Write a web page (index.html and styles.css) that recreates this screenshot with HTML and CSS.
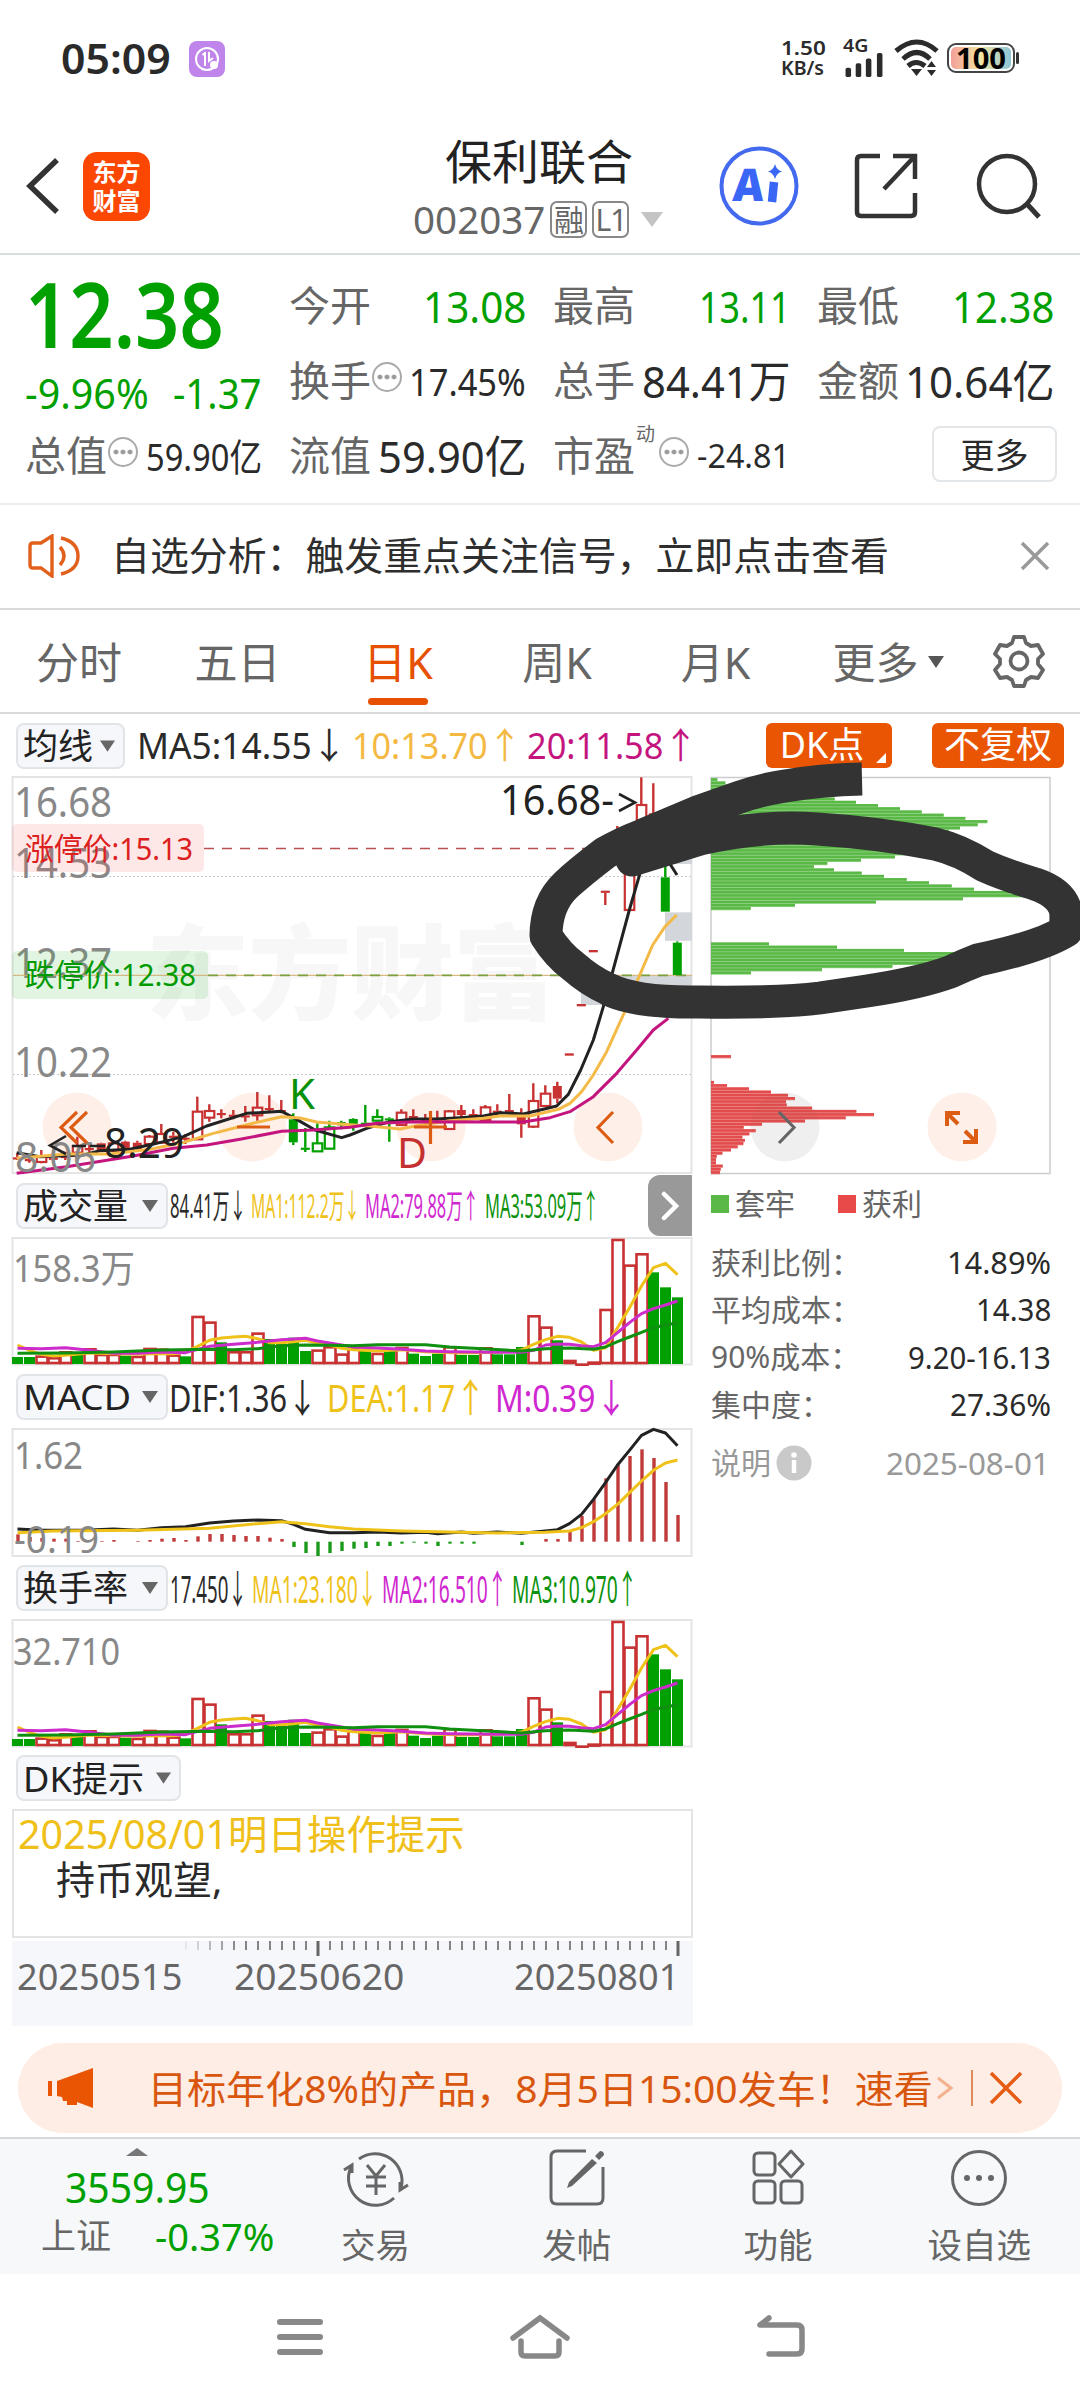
FILE: index.html
```html
<!DOCTYPE html>
<html lang="zh-CN">
<head>
<meta charset="utf-8">
<title>保利联合 002037</title>
<link rel="stylesheet" href="styles.css">
</head>
<body>
<header class="status">
  <span class="clock fit" data-w="110">05:09</span>
  <svg class="app-dot" width="36" height="36" viewBox="0 0 36 36"><rect width="36" height="36" rx="8" fill="#bf85ea"/><circle cx="18" cy="18" r="11" fill="none" stroke="#fff" stroke-width="2"/><path d="M16 11v14M13.500 14l2.500-2M20 11v9l4-3" fill="none" stroke="#fff" stroke-width="2"/><circle cx="25" cy="24" r="4" fill="#fff"/></svg>
  <div class="rate"><span class="fit" data-w="45">1.50</span><span class="fit" data-w="43">KB/s</span></div>
  <div class="signal"><span class="fit" data-w="25">4G</span>
    <svg width="42" height="24" viewBox="0 0 42 26" fill="#2b2b2b"><rect x="1" y="16" width="6" height="10" rx="2"/><rect x="12" y="11" width="6" height="15" rx="2"/><rect x="23" y="6" width="6" height="20" rx="2"/><rect x="35" y="0" width="6" height="26" rx="2"/></svg></div>
  <svg class="wifi" width="46" height="38" viewBox="0 0 46 38"><g fill="none" stroke="#2b2b2b" stroke-width="5"><path d="M2 12Q23-6 43 12M9 20Q23 7 36 20M14 27Q22 20 31 27"/></g><path d="M17 30h11l-5.500 7zM33 28h9l-4.500-6zM33 31h9l-4.500 6z" fill="#2b2b2b"/></svg>
  <div class="battery"><span class="fit" data-w="50">100</span></div>
</header>

<div class="titlebar">
  <svg class="back" width="34" height="56" viewBox="0 0 34 56"><path d="M31 2L4 28l27 26" fill="none" stroke="#333" stroke-width="5.500"/></svg>
  <div class="brand"><span>东方</span><span>财富</span></div>
  <div class="name">
    <h1>保利联合</h1>
    <div class="code"><span class="fit" data-w="132">002037</span><i>融</i><i>L1</i><svg width="22" height="15" viewBox="0 0 22 15"><path d="M0 0h22L11 15z" fill="#c4c4c4"/></svg></div>
  </div>
  <svg class="ai" width="80" height="82" viewBox="0 0 80 82"><circle cx="40" cy="41" r="37.500" fill="#fff" stroke="#4269ee" stroke-width="4"/><text x="14" y="56" textLength="31" lengthAdjust="spacingAndGlyphs" transform="skewX(-4) translate(3 0)">A</text><path d="M55 37l-2 20" stroke="#3a66f5" stroke-width="8.500"/><path d="M56 19q1.500 6 7 7.500q-5.500 1.500-7 7.500q-1.500-6-7-7.500q5.500-1.500 7-7.500z" fill="#3a66f5"/></svg>
  <svg class="share" width="64" height="66" viewBox="0 0 64 66"><path d="M26 3H7q-4 0-4 4v52q0 4 4 4h50q4 0 4-4V40M39 3h22v23M61 3L30 36" fill="none" stroke="#333" stroke-width="4.500"/></svg>
  <svg class="search" width="66" height="68" viewBox="0 0 66 68"><circle cx="31" cy="32" r="28" fill="none" stroke="#333" stroke-width="4.500"/><path d="M51 52l12 13" stroke="#333" stroke-width="5"/></svg>
</div>

<section class="quote">
  <div class="last">
    <strong class="fit" data-w="199">12.38</strong>
    <div><span class="fit" data-w="124">-9.96%</span><span class="fit" data-w="89">-1.37</span></div>
  </div>
  <div class="cell"><label>今开</label><b class="fit down" data-w="103">13.08</b></div>
  <div class="cell"><label>最高</label><b class="fit down" data-w="91">13.11</b></div>
  <div class="cell"><label>最低</label><b class="fit down" data-w="102">12.38</b></div>
  <div class="cell"><label>换手</label><u></u><b class="fit mid" data-w="117">17.45%</b></div>
  <div class="cell"><label>总手</label><b class="fit" data-w="148">84.41万</b></div>
  <div class="cell"><label>金额</label><b class="fit" data-w="149">10.64亿</b></div>
  <div class="cell"><label>总值</label><u></u><b class="fit mid" data-w="116">59.90亿</b></div>
  <div class="cell"><label>流值</label><b class="fit" data-w="148">59.90亿</b></div>
  <div class="cell"><label>市盈</label><sup>动</sup><u></u><b class="fit small" data-w="93">-24.81</b></div>
  <div class="cell end"><button class="more">更多</button></div>
</section>

<section class="notice">
  <svg width="52" height="44" viewBox="0 0 52 44"><g fill="none" stroke="#e0601c" stroke-width="3.400"><path d="M2 12q0-3 3-3h8L24 2v40L13 34H5q-3 0-3-3z"/><path d="M32 13q8 9 0 18M33 4q17 4 17 18T33 40"/></g></svg>
  <p>自选分析：触发重点关注信号，立即点击查看</p>
  <svg width="30" height="30" viewBox="0 0 30 30"><path d="M2 2l26 26M28 2L2 28" stroke="#999" stroke-width="3.500"/></svg>
</section>

<nav class="tabs">
  <a style="width:158px">分时</a><a style="width:159px">五日</a><a class="on" style="width:162px">日K</a><a style="width:156px">周K</a><a style="width:161px">月K</a>
  <a class="drop">更多<svg width="16" height="12" viewBox="0 0 16 12"><path d="M0 0h16L8 12z" fill="#555"/></svg></a>
  <svg class="gear" width="54" height="54" viewBox="0 0 54 54"><g fill="none" stroke="#666" stroke-width="3.800" stroke-linejoin="round"><path d="M22 3h10l2 6 5 3 7-1 5 9-5 5v5l5 6-5 8-7-1-5 3-2 6H22l-2-6-5-3-7 1-5-8 5-6v-5l-5-5 5-9 7 1 5-3z"/><circle cx="27" cy="27" r="8.500"/></g></svg>
</nav>

<div class="legend top">
  <span class="pill ma">均线<svg width="15" height="12" viewBox="0 0 16 12"><path d="M0 0h16L8 12z"/></svg></span>
  <span class="fit black" data-w="210">MA5:14.55↓</span><span class="fit gold" data-w="170">10:13.70↑</span><span class="fit pink" data-w="171">20:11.58↑</span>
  <span class="tag dk">DK点</span><span class="tag">不复权</span>
</div>

<main class="body">
  <div class="charts">
    <svg id="kline" width="700" height="400" viewBox="0 775 700 400"></svg>
    <div class="legend vol">
      <span class="pill">成交量<svg width="16" height="12" viewBox="0 0 16 12"><path d="M0 0h16L8 12z"/></svg></span>
      <span class="fit black" data-w="76">84.41万↓</span><span class="fit yellow" data-w="109">MA1:112.2万↓</span><span class="fit violet" data-w="114">MA2:79.88万↑</span><span class="fit green" data-w="114">MA3:53.09万↑</span>
      <span class="expand"><svg width="18" height="30" viewBox="0 0 18 30"><path d="M3 3l12 12L3 27" fill="none" stroke="#fff" stroke-width="4.500" stroke-linecap="round"/></svg></span>
    </div>
    <svg id="volume" width="700" height="130" viewBox="0 1235 700 130"></svg>
    <div class="legend macd">
      <span class="pill"><em class="fit" data-w="108">MACD</em><svg width="16" height="12" viewBox="0 0 16 12"><path d="M0 0h16L8 12z"/></svg></span>
      <span class="fit black" data-w="149">DIF:1.36↓</span><span class="fit yellow" data-w="159">DEA:1.17↑</span><span class="fit violet" data-w="132">M:0.39↓</span>
    </div>
    <svg id="macd" width="700" height="130" viewBox="0 1426 700 130"></svg>
    <div class="legend turn">
      <span class="pill">换手率<svg width="16" height="12" viewBox="0 0 16 12"><path d="M0 0h16L8 12z"/></svg></span>
      <span class="fit black" data-w="77">17.450↓</span><span class="fit yellow" data-w="125">MA1:23.180↓</span><span class="fit violet" data-w="125">MA2:16.510↑</span><span class="fit green" data-w="125">MA3:10.970↑</span>
    </div>
    <svg id="turnover" width="700" height="130" viewBox="0 1617 700 130"></svg>
    <div class="legend hints"><span class="pill hint"><em class="fit" data-w="121">DK提示</em><svg width="15" height="12" viewBox="0 0 16 12"><path d="M0 0h16L8 12z"/></svg></span></div>
    <div class="tip"><p class="fit" data-w="447">2025/08/01明日操作提示</p><p>持币观望,</p></div>
    <div class="axis"><svg id="ticks" width="680" height="17" viewBox="12 1941 680 17"></svg>
      <div><span class="fit" data-w="165">20250515</span><span class="fit" data-w="170">20250620</span><span class="fit" data-w="165">20250801</span></div></div>
  </div>
  <aside class="chips">
    <svg id="dist" width="380" height="400" viewBox="700 775 380 400"></svg>
    <div class="keys"><i class="g"></i>套牢<i class="r"></i>获利</div>
    <dl>
      <div><dt>获利比例：</dt><dd class="fit" data-w="104">14.89%</dd></div>
      <div><dt>平均成本：</dt><dd class="fit" data-w="75">14.38</dd></div>
      <div><dt>90%成本：</dt><dd class="fit" data-w="143">9.20-16.13</dd></div>
      <div><dt>集中度：</dt><dd class="fit" data-w="101">27.36%</dd></div>
    </dl>
    <div class="explain">说明<svg width="36" height="36" viewBox="0 0 36 36"><circle cx="18" cy="18" r="17.500" fill="#c9c9c9"/><path d="M18 15v13" stroke="#fff" stroke-width="4.500"/><circle cx="18" cy="10" r="2.800" fill="#fff"/></svg><span class="fit" data-w="164">2025-08-01</span></div>
  </aside>
  <svg class="scribble" width="560" height="270" viewBox="520 755 560 270"><path d="M862 779Q820 780 785 786Q760 790 740 797L700 811L643 835Q620 844 605 853Q580 872 566 885Q546 904 546 936Q558 955 573 966Q590 981 608 989Q635 1003 700 1002Q780 1003 820 998L867 991Q920 983 950 972Q965 965 978 960Q1040 947 1066 931L1066 912Q1062 893 1035 884Q1005 875 985 866Q960 850 935 844Q880 833 817 829Q760 825 700 839L632 860"/><circle cx="632" cy="860" r="16.500"/></svg>
</main>

<div class="banner">
  <svg width="46" height="40" viewBox="0 0 46 40" fill="#ea5504"><path d="M9 13L45 0v40L29 34v3H19v-4h-4l-1-4-5-1zM0 13h4v15H0z"/></svg>
  <p class="fit" data-w="785">目标年化8%的产品，8月5日15:00发车！速看</p>
  <svg width="18" height="24" viewBox="0 0 18 24"><path d="M2 2l13 10L2 22" fill="none" stroke="#f3b28d" stroke-width="3"/></svg>
  <hr>
  <svg width="34" height="34" viewBox="0 0 34 34"><path d="M2 2l30 30M32 2L2 32" stroke="#e65c14" stroke-width="3.500"/></svg>
</div>

<footer class="bottom">
  <div class="index"><svg width="22" height="8" viewBox="0 0 22 8"><path d="M0 8h22L11 0z" fill="#777"/></svg><b class="fit" data-w="145">3559.95</b><div><span>上证</span><b class="fit" data-w="119">-0.37%</b></div></div>
  <a><svg width="66" height="60" viewBox="0 0 66 60"><g fill="none" stroke="#666" stroke-width="3"><path d="M16 11A27 27 0 0 1 58 40M51 50A27 27 0 0 1 8 19M1 22l8-5v8M65 37l-8 5v-8"/><path d="M24 17l9 11 9-11M23 29h20M23 38h20M33 28v19"/></g></svg>交易</a>
  <a><svg width="58" height="60" viewBox="0 0 58 60"><path d="M38 3H9q-6 0-6 6v41q0 6 6 6h40q6 0 6-6V19" fill="none" stroke="#666" stroke-width="3"/><path d="M44 11l5 4-25 23-5 2 2-6zM47 8l5-5q4 0 4 4l-5 5z" fill="#666"/></svg>发帖</a>
  <a><svg width="54" height="60" viewBox="0 0 54 60"><g fill="none" stroke="#666" stroke-width="3"><rect x="3" y="5" width="21" height="22" rx="4"/><rect x="3" y="33" width="21" height="22" rx="4"/><rect x="30" y="33" width="21" height="22" rx="4"/><path d="M40 3l12 13-12 13-12-13z" stroke-linejoin="round"/></g></svg>功能</a>
  <a><svg width="58" height="60" viewBox="0 0 58 60"><circle cx="29" cy="30" r="26.500" fill="none" stroke="#666" stroke-width="3"/><g fill="#666"><circle cx="17" cy="30" r="3"/><circle cx="29" cy="30" r="3"/><circle cx="41" cy="30" r="3"/></g></svg>设自选</a>
</footer>

<nav class="system">
  <svg width="46" height="38" viewBox="0 0 46 38"><path d="M3 4h40M3 19h40M3 34h40" stroke="#888" stroke-width="6" stroke-linecap="round"/></svg>
  <svg width="60" height="46" viewBox="0 0 60 46"><path d="M3 24L30 4l27 20M11 27v11q0 4 4 4h30q4 0 4-4V27" fill="none" stroke="#888" stroke-width="5.500" stroke-linecap="round"/></svg>
  <svg width="50" height="44" viewBox="0 0 50 44"><path d="M13 3L4 10h37q5 0 5 5v19q0 5-5 5H13" fill="none" stroke="#888" stroke-width="5.500" stroke-linecap="round" stroke-linejoin="round"/></svg>
</nav>
<script src="script.js"></script>
</body>
</html>
```
FILE: styles.css
```css
* { box-sizing: border-box; margin: 0; padding: 0; }
body { width: 1080px; height: 2400px; overflow: hidden; background: #fff; color: #2a2a2a; font: 400 38px/1 "Noto Sans", "Noto Sans CJK SC", sans-serif; }
svg { display: block; flex: none; }
svg text { font-family: "Noto Sans", "Noto Sans CJK SC", sans-serif; }
b, i, em, u { font-weight: 400; font-style: normal; text-decoration: none; }
.fit { display: inline-block; flex: none; white-space: nowrap; transform-origin: 0 50%; }

.status { display: flex; align-items: center; height: 116px; padding-left: 61px; }
.clock { font-size: 42px; font-weight: 600; }
.app-dot { margin: 2px 556px 0 18px; }
.rate, .signal { display: flex; flex-direction: column; font-weight: 600; color: #2b2b2b; }
.rate { width: 44px; margin-right: 18px; font-size: 20px; align-items: flex-start; }
.signal { width: 42px; margin-right: 9px; font-size: 18px; height: 38px; justify-content: space-between; align-items: flex-start; }
.signal .fit { line-height: 12px; }
.wifi { margin-right: 7px; }
.battery { position: relative; display: flex; justify-content: center; align-items: center; width: 68px; height: 30px; border: 2px solid #444; border-radius: 9px; background: linear-gradient(90deg, #f4a09a, #f5e6a0 50%, #8cc5d8) content-box; padding: 2px; font-size: 28px; font-weight: 700; color: #000; }
.battery::after { content: ""; position: absolute; right: -6px; top: 7px; width: 3px; height: 12px; background: #333; border-radius: 2px; }

.titlebar { display: flex; align-items: center; height: 139px; padding: 6px 0 3px 26px; border-bottom: 2px solid #d8dddf; }
.brand { display: flex; flex-direction: column; align-items: center; justify-content: center; width: 67px; height: 69px; margin-left: 23px; border-radius: 14px; background: #fc4703; color: #fff; font-size: 24px; font-weight: 700; gap: 5px; }
.name { width: 260px; margin-left: 259px; text-align: center; padding-top: 2px; }
.name h1 { font-size: 47px; font-weight: 400; line-height: 56px; color: #222; }
.code { display: flex; align-items: center; height: 44px; margin: 8px 0 0 4px; color: #666; font-size: 38px; }
.code i { width: 37px; height: 37px; margin-left: 5px; border: 2px solid #888; border-radius: 7px; font-size: 30px; line-height: 33px; text-align: center; }
.code i + i { letter-spacing: -1px; }
.code svg { margin-left: 12px; }
.ai { margin-left: 50px; }
.ai text { font-size: 45px; font-weight: 900; fill: #3a66f5; }
.share { margin-left: 55px; }
.search { margin-left: 58px; }

.quote { display: grid; grid-template-columns: repeat(4, 237px); grid-template-rows: 75px 75px 75px; column-gap: 27px; height: 250px; padding: 13px 0 0 25px; border-bottom: 2px solid #e9edef; }
.last { grid-row: 1 / 3; color: #00a000; }
.last strong { font-size: 90px; font-weight: 600; line-height: 100px; margin-top: -5px; }
.last div { display: flex; justify-content: space-between; font-size: 41px; line-height: 48px; margin-top: 6px; }
.cell { display: flex; align-items: center; }
.cell label { font-size: 41px; color: #666; }
.cell b { margin-left: auto; font-size: 44px; }
.cell b.fit { transform-origin: 100% 50%; }
.cell b.down { color: #00a000; }
.cell b.mid { font-size: 38px; }
.cell b.small { font-size: 33px; }
.cell u { width: 30px; height: 30px; margin: -8px 0 0 1px; border: 2.500px solid #aaa; border-radius: 50%; background: radial-gradient(circle, #999 2px, transparent 2.800px) 50% 50% / 7px 30px; background-clip: content-box; padding: 2px; }
.cell sup { font-size: 19px; color: #666; margin: -42px 3px 0 1px; }
.cell.end { justify-content: flex-end; }
.more { width: 125px; height: 56px; border: 2px solid #e3e7e9; border-radius: 8px; background: #fff; color: #2a2a2a; font: 400 34px/1 "Noto Sans CJK SC", sans-serif; margin-right: -3px; margin-bottom: 3px; }

.notice { display: flex; align-items: center; height: 105px; padding: 0 30px 2px 28px; border-bottom: 2px solid #d9d9d9; }
.notice p { flex: 1; margin-left: 31px; font-size: 38.900px; color: #2e2e2e; white-space: nowrap; }

.tabs { display: flex; align-items: center; height: 104px; border-bottom: 2px solid #d9d9d9; font-size: 43px; color: #666; }
.tabs a { position: relative; display: flex; align-items: center; justify-content: center; height: 102px; padding-top: 2px; }
.tabs .on { color: #e65000; }
.tabs .on::after { content: ""; position: absolute; left: 51px; bottom: 7px; width: 60px; height: 7px; border-radius: 4px; background: #e65000; }
.tabs .drop { width: 146px; gap: 9px; margin-left: 19px; }
.gear { margin-left: 31px; }

.legend { display: flex; align-items: center; width: 692px; height: 61px; padding-left: 16px; }
.pill { display: flex; align-items: center; justify-content: space-between; width: 152px; height: 46px; margin-right: 3px; padding: 0 8px 0 5px; border: 2px solid #e2e5e8; border-radius: 8px; background: #f6f7fa; font-size: 35px; color: #222; flex: none; }
.pill svg { fill: #666; }
.pill.ma { width: 109px; margin-right: 12px; }
.pill.hint { width: 165px; }
.black { color: #2a2a2a; }
.gold { color: #f4b942; }
.pink { color: #c4157f; }
.yellow { color: #efc21a; }
.violet { color: #d028d0; }
.green { color: #0c920c; }
.top { width: 1080px; gap: 5px; padding: 2px 0 0 16px; font-size: 36px; }
.top .pill { margin-right: 7px; }
.tag { position: relative; width: 132px; height: 45px; border-radius: 6px; background: #ea5504; color: #fff; font-size: 36px; line-height: 43px; text-align: center; }
.tag.dk { width: 126px; margin: 0 35px 0 auto; padding-right: 14px; }
.tag:last-child { margin-right: 16px; }
.tag.dk::after { content: ""; position: absolute; right: 6px; bottom: 5px; border: 5px solid; border-color: transparent #fff #fff transparent; }
.vol { gap: 5px; font-size: 33px; }
.macd { gap: 9px; font-size: 39px; }
.turn { gap: 5px; font-size: 39px; }
.vol .pill, .turn .pill { margin-right: -3px; }
.macd .pill { margin-right: -8px; }
.expand { display: flex; align-items: center; justify-content: center; width: 44px; height: 61px; margin-left: auto; background: #999; border-radius: 12px 0 0 12px; }

.body { position: relative; display: flex; align-items: flex-start; height: 1268px; }
.charts { width: 700px; flex: none; }
.hints { padding-bottom: 1px; }
.tip { width: 681px; height: 129px; margin: 0 0 3px 12px; padding: 0 4px; border: 2px solid #e4e4e4; }
.tip p { display: block; font-size: 39px; line-height: 46px; }
.tip .fit { color: #f0c01a; width: max-content; font-size: 40px; }
.tip p + p { padding-left: 38px; margin-top: -1px; }
.axis { width: 681px; height: 85px; margin-left: 12px; background: #f6f7fa; color: #666; font-size: 37px; }
.axis div { display: flex; padding-left: 5px; margin-top: -1px; }

.chips { width: 380px; color: #666; font-size: 30px; }
.keys { display: flex; align-items: center; height: 57px; padding-left: 11px; }
.keys i { width: 18px; height: 18px; margin-right: 6px; }
.keys .g { background: #5ab946; }
.keys .r { background: #e84a4a; margin-left: 43px; }
.chips dl { padding: 7px 29px 0 11px; }
.chips dl div { display: flex; justify-content: space-between; align-items: center; height: 47.300px; }
.chips dd { color: #2a2a2a; font-size: 31px; }
.explain { display: flex; align-items: center; height: 62px; padding: 8px 30px 0 11px; color: #999; }
.explain svg { margin-left: 5px; }
.explain .fit { font-size: 31px; margin-left: auto; transform-origin: 100% 50%; }
.scribble { position: absolute; left: 520px; top: -20px; pointer-events: none; }
.scribble path { fill: none; stroke: #333; stroke-width: 33px; stroke-linejoin: round; }
.scribble circle { fill: #333; }

.banner { display: flex; align-items: center; width: 1044px; height: 90px; margin: 0 18px; padding-left: 30px; border-radius: 45px; background: #fdede4; color: #d9560f; }
.banner p { font-size: 38px; margin-left: 54px; }
.banner > svg:nth-of-type(2) { margin-left: 3px; }
.banner hr { width: 2px; height: 36px; margin: 0 16px 0 17px; border: 0; background: #e08a5c; }

.bottom { display: flex; height: 137px; margin-top: 4px; border-top: 2px solid #d5d9dc; background: #f7f8fa; color: #666; }
.bottom a { display: flex; flex-direction: column; align-items: center; width: 202px; padding-top: 9px; gap: 20px; font-size: 34.500px; }
.index { display: flex; flex-direction: column; align-items: center; width: 276px; padding-top: 9px; color: #00a000; font-size: 41px; }
.index > b { margin-top: 11px; }
.index div { display: flex; align-items: center; align-self: stretch; justify-content: space-between; margin-top: 8px; padding: 0 1px 0 41px; font-size: 39px; }
.index div span { color: #666; font-size: 35px; }

.system { display: flex; align-items: center; height: 126px; padding: 0 274px 0 277px; justify-content: space-between; }
```
FILE: script.js
```js
// Condense or widen labels so that each one fills the slot given in data-w.
document.querySelectorAll('.fit').forEach(el => {
  const want = +el.dataset.w, natural = el.offsetWidth;
  const right = getComputedStyle(el).transformOrigin.split(' ')[0] !== '0px';
  el.style.transform = `scaleX(${want / natural})`;
  if (right) {
    const gap = document.createElement('span');
    gap.style.flex = '1';
    el.parentNode.insertBefore(gap, el);
    el.style.marginLeft = `${want - natural}px`;
  } else {
    el.style.marginRight = `${want - natural}px`;
  }
});

const RED = '#c83232', GREEN = '#00a000', FRAME = '#e4e4e4';
const cx = i => 17.5 + 12 * i;
const rect = (x, y, w, h, a) => `<rect x="${x}" y="${y}" width="${w}" height="${h}" ${a}/>`;
const line = (pts, color, w = 3) => `<polyline points="${pts}" fill="none" stroke="${color}" stroke-width="${w}" stroke-linejoin="round"/>`;
const series = (s, y0) => s.trim().split(/\s+/).map(p => { const [i, v] = p.split(':'); return `${cx(+i)},${y0 + v / 3}`; }).join(' ');
const curve = (s, x0, y0) => s.trim().split(/\s+/).map(p => { const [x, y] = p.split(','); return `${x0 + x / 3},${y0 + y / 3}`; }).join(' ');
const text = (s, x, y, w, size, color, extra = '') => `<text x="${x}" y="${y}" font-size="${size}" fill="${color}" textLength="${w}" lengthAdjust="spacingAndGlyphs" ${extra}>${s}</text>`;
const frame = (y, h) => rect(12.5, y, 679, h, `fill="none" stroke="${FRAME}" stroke-width="2"`);
const put = (id, html) => { document.getElementById(id).innerHTML = html; };

// Volume and turnover share the same shape.
const bars = 'g558 g558 r553 r558 r540 g552 r531 r548 r548 g554 r554 r530 r532 r550 g556 r434 r451 g514 r540 r540 r484 g504 g518 g500 g540 r535 r525 r547 r530 g540 r545 g540 r527 g548 g555 g548 r525 g552 g552 r528 g550 g550 g528 r432 r466 g508 r566 r577 r571 r413 r203 r280 r246 g304 g349 g379'.split(' ');
const volMa = [
  ['#efc21a', '0:522 1:538 2:550 3:555 4:553 6:546 9:549 13:548 14:542 15:526 16:508 17:501 18:498 19:496 20:503 21:515 22:515 23:512 24:508 25:517 26:522 27:532 28:536 30:540 32:536 34:542 37:546 40:544 42:537 43:520 44:506 45:496 46:499 47:513 48:538 49:530 50:470 51:410 52:345 53:290 54:277 55:311'],
  ['#cc2ccc', '0:532 2:533 4:530 6:538 8:547 10:547 12:543 14:545 16:526 18:520 20:514 22:506 24:502 25:510 26:516 28:528 30:531 32:535 34:540 36:542 40:544 42:544 43:538 44:522 45:519 46:520 47:524 48:527 49:515 50:485 51:455 52:428 53:413 54:402 55:390'],
  ['#109010', '0:547 4:546 8:543 12:537 16:535 18:536 20:533 22:524 24:522 26:523 28:524 30:521 34:521 36:528 38:532 42:540 44:533 46:531 48:535 49:528 50:512 51:498 52:484 53:470 54:462 55:455']];
function volumePanel(id, y0, label, ly, lw, lx) {
  let s = frame(y0 + 67, 126.5);
  s += text(label, lx, ly, lw, 38, '#888');
  bars.forEach((b, i) => {
    const top = y0 + b.slice(1) / 3, bottom = y0 + 193;
    s += b[0] === 'g' ? rect(cx(i) - 5.5, top, 11, bottom - top, `fill="${GREEN}"`)
      : rect(cx(i) - 5, top + 1.3, 11, Math.max(1, bottom - top - 2.3), `fill="#fff" stroke="${RED}" stroke-width="2.6"`);
  });
  volMa.forEach(([c, p]) => { s += line(series(p, y0), c); });
  put(id, s);
}
volumePanel('volume', 1170, '158.3万', 1281, 122, 13);
volumePanel('turnover', 1552, '32.710', 1664, 107, 13);

// MACD
(() => {
  let s = frame(1428, 127), zero = 1170 + 1112 / 3;
  '0:1090 1:1098 2:1101 3:1103 4:1103 5:1110 7:1110 8:1107 10:1110 11:1107 12:1103 13:1101 14:1107 15:1096 16:1089 17:1089 18:1092 19:1095 20:1095 21:1100 22:1104 23:1128 24:1146 25:1155 26:1146 27:1140 28:1133 29:1131 30:1125 31:1125 32:1118 33:1115 34:1118 35:1125 36:1118 37:1118 38:1118 42:1122 44:1104 45:1104 46:1080 47:1035 48:985 49:922 50:880 51:855 52:835 53:861 54:933 55:1032'.split(' ').forEach(p => {
    const [i, v] = p.split(':').map(Number), y = 1170 + v / 3;
    s += rect(cx(i) - 1.2, Math.min(y, zero), 3.4, Math.abs(y - zero), `fill="${v < 1112 ? '#c03a3a' : '#1a9a1a'}"`);
  });
  s += line(series('0:1074 2:1078 6:1077 8:1074 10:1078 12:1070 14:1067 16:1056 18:1050 20:1047 22:1049 23:1060 24:1075 26:1085 28:1085 30:1083 32:1086 34:1084 35:1088 37:1083 38:1087 40:1083 42:1087 44:1080 45:1076 46:1058 47:1030 48:985 49:935 50:882 51:838 52:793 53:775 54:786 55:824', 1170), '#222');
  s += line(series('0:1085 3:1080 10:1078 16:1072 20:1058 22:1052 24:1058 26:1067 28:1074 32:1080 40:1086 44:1084 46:1080 47:1070 48:1052 49:1028 50:1000 51:965 52:930 53:898 54:876 55:867', 1170), '#efc21a');
  s += text('1.62', 14, 1468, 69, 38, '#888') + text('-0.19', 14, 1552, 85, 38, '#888');
  put('macd', s);
})();

// Candles: colour + h (hollow) / f (filled), high, open/close edges, low.
(() => {
  const candles = `0rf,1150,1162,1165,1170 1rf,1152,1167,1170,1178 2rh,1140,1160,1176,1180 3rf,1152,1163,1166,1175 4rf,1145,1158,1162,1170 5rh,1100,1128,1148,1152 6rf,1122,1134,1137,1150 7rf,1118,1120,1140,1145 8rh,1112,1120,1142,1146 9rf,1112,1115,1140,1145 10rf,1112,1118,1138,1140 11rh,1095,1100,1122,1128 12rh,1062,1092,1118,1120 13rf,1085,1097,1100,1118 14rf,1092,1103,1106,1122
15rh,980,1025,1108,1108 16rh,1003,1023,1043,1055 17rf,1018,1029,1033,1045 18rf,1020,1034,1038,1048 19rf,1008,1036,1040,1055 20rh,966,1013,1036,1052 21rf,976,1014,1018,1028 22rf,990,1020,1024,1030 23gf,1030,1048,1117,1125 24gf,1074,1133,1137,1146 25gh,1060,1120,1144,1146 26gh,1052,1072,1136,1138 27gf,1052,1056,1066,1078
28gf,1045,1047,1062,1082 29gf,1005,1058,1061,1066 30gh,1018,1041,1052,1056 31gf,1042,1045,1050,1115 32rh,1018,1028,1065,1068 33rf,1018,1038,1042,1055 34rf,1032,1048,1051,1060 35rf,1022,1045,1048,1060 36rh,1020,1024,1077,1080 37rf,1005,1020,1035,1040 38rf,1018,1032,1036,1050 39rh,1005,1012,1050,1054 40rf,1003,1022,1026,1036 41rf,972,1020,1024,1030 42rf,1015,1040,1063,1103 43rh,940,993,1070,1074 44rh,946,971,1008,1010 45rf,935,948,986,1000
46rf,850,850,857,857 47rf,702,702,709,709 48rf,540,540,547,547 49rf,362,362,368,405 50rf,168,200,230,240 51rh,230,230,420,422 52rh,22,105,280,280 53rf,40,130,140,150 54gf,285,322,425,425 55gf,514,518,615,615`;
  let s = `<text x="146" y="1012" font-size="103" font-weight="900" fill="#f7f7f7" textLength="410">东方财富</text>`;
  s += frame(777, 396);
  [876.5, 975.5, 1074.5].forEach(y => { s += `<path d="M13 ${y}H692" stroke="#ccc" stroke-width="1" stroke-dasharray="2 2"/>`; });
  s += rect(665, 912.3, 27, 28.5, 'fill="#d3d6da"') + rect(581, 975.5, 111, 29.5, 'fill="#d3d6da"') + rect(670, 856, 22, 8, 'fill="#d3d6da"');
  [[16.68, 816.5], [14.53, 878], [12.37, 977.5], [10.22, 1076.5]].forEach(([t, y]) => { s += text(t, 14, y, 98, 41, '#888'); });
  s += rect(12, 824, 192, 48, 'rx="5" fill="#fb6060" fill-opacity=".15"') + text('涨停价:15.13', 25, 860, 168, 31, '#dc2020');
  s += rect(12, 951, 196, 48, 'rx="5" fill="#30b030" fill-opacity=".14"');
  s += '<path d="M204 848.500H590" stroke="#b85050" stroke-width="1.500" stroke-dasharray="10 8"/><path d="M13 975.300H692" stroke="#d8b070" stroke-width="1" /><path d="M208 975.300H692" stroke="#7aa040" stroke-width="1.700" stroke-dasharray="10 8"/>';
  s += text('跌停价:12.38', 25, 986, 171, 31, '#009a00');
  s += [77, 252, 431, 608].map(x => `<circle cx="${x}" cy="1127" r="34.500" fill="#fef0e8"/>`).join('');
  candles.split(/\s+/).forEach(c => {
    const [, i, col, kind, rest] = c.match(/^(\d+)([rg])([hf]),(.*)$/), [hi, a, b, lo] = rest.split(',').map(v => 770 + v / 3), x = cx(+i) - .2;
    const color = col === 'r' ? RED : GREEN;
    s += `<path d="M${x} ${hi}V${a}M${x} ${b}V${lo}" stroke="${color}" stroke-width="2.400"/>`;
    s += kind === 'h' ? rect(x - 4.500, a, 9.500, b - a, `fill="#fff" stroke="${color}" stroke-width="2.200"`) : rect(x - 4.500, a, 9, Math.max(b - a, 2.200), `fill="${color}"`);
  });
  s += line(curve('50,1148 120,1160 250,1155 300,1142 390,1138 470,1120 550,1100 620,1068 740,1030 845,1024 890,1048 945,1080 1025,1103 1050,1095 1100,1075 1170,1055 1240,1047 1310,1047 1380,1043 1450,1038 1500,1028 1570,1032 1630,1018 1670,1008 1705,973 1742,900 1780,810 1810,710 1838,605 1888,420 1920,310', 0, 770), '#222');
  s += line('670,864 677,875', '#222');
  s += line(curve('50,1165 200,1152 330,1152 450,1138 540,1120 640,1090 750,1062 845,1040 900,1044 950,1056 1050,1064 1110,1068 1200,1077 1250,1067 1350,1052 1450,1045 1500,1038 1590,1038 1675,1018 1710,1000 1745,965 1780,915 1820,845 1872,730 1912,632 1958,525 1995,470 2030,435', 0, 770), '#f4ba48');
  s += line(curve('50,1210 200,1190 400,1158 520,1135 620,1125 720,1108 845,1084 940,1080 1050,1072 1130,1060 1250,1055 1570,1056 1650,1043 1710,1025 1780,980 1850,910 1910,840 1960,780 2005,745', 0, 770), '#c4157f');
  s += text('8.06', 15, 1172, 81, 41, '#888');
  s += '<path d="M66 1136L50 1145.500L66 1154M72 1146h14M90 1146h15" fill="none" stroke="#222" stroke-width="2.600"/>' + text('8.29', 104, 1158, 80, 41, '#222');
  s += text('16.68-', 500, 815, 114, 41, '#222') + '<path d="M619 794l16 8.500-16 8.500" fill="none" stroke="#222" stroke-width="2.600"/>';
  s += text('K', 289, 1109, 26, 41, '#089008') + text('D', 397, 1168, 30, 41, '#c43030');
  s += '<g fill="none" stroke="#dc5c14" stroke-width="3.200"><path d="M77 1112l-16 15.500 16 15.500M87 1112l-16 15.500 16 15.500M237 1127h33M414 1127h33M430.500 1111v33M613 1112l-15 15.500 15 15.500"/></g>';
  put('kline', s);
})();

// Chip distribution
(() => {
  const g = { 0: '52 76 140 200 270 340 404 468 534 600 665 731 796 862 833 780 747 720 700 690 680 670 660 640 585 483 382 342 402 485 552 620 687 755 822 930 1000 789 528 285 152', 51: '207 411 612 800 800 790 700 577 366 153' };
  const r = { 86: '93', 94: '42 81 147 213 264 285 258 260 336 469 522 437 315 186 131 167 148 127 135 130 113 93 67 50 48 48 68 62 60' };
  let s = rect(711, 777.5, 339, 396, 'fill="none" stroke="#ccc" stroke-width="1.500"');
  s += '<circle cx="785" cy="1127" r="34.500" fill="#f4f4f4"/><circle cx="962" cy="1127" r="34.500" fill="#fef0e8"/>';
  const draw = (set, c) => Object.entries(set).forEach(([k, v]) => v.split(' ').forEach((e, j) => {
    const y = 770 + (29 + 9.66 * (+k + j)) / 3 - 1.400, w = e / 3 - 11;
    s += rect(711, y, w, 3.220, `fill="${c}" opacity=".65"`) + rect(711, y, w, 2.500, `fill="${c}"`);
  }));
  draw(g, '#5ab946'); draw(r, '#e34c4c');
  s += '<circle cx="785" cy="1127" r="34.500" fill="#666" opacity=".03"/><path d="M779 1112l15 15.500-15 15.500" fill="none" stroke="#666" stroke-width="3.200"/>';
  s += '<g fill="none" stroke="#dc5c14" stroke-width="4"><path d="M947 1126v-13h13M947 1113l11 11M963 1142h13v-13M976 1142l-11-11"/></g>';
  put('dist', s);
})();

// Date axis
(() => {
  let s = '';
  for (let x = 186, n = 0; x < 684; x += 12, n++) {
    const major = x === 318 || x === 678;
    s += rect(x - (major ? 1.5 : .8), 1941, major ? 3 : 1.6, major ? 15 : 9, `fill="#666" opacity="${Math.min(1, .12 + n * .2)}"`);
  }
  put('ticks', s);
  const [, b, c] = document.querySelectorAll('.axis .fit');
  b.style.marginLeft = '52px';
  c.style.marginLeft = '109px';
})();
```
